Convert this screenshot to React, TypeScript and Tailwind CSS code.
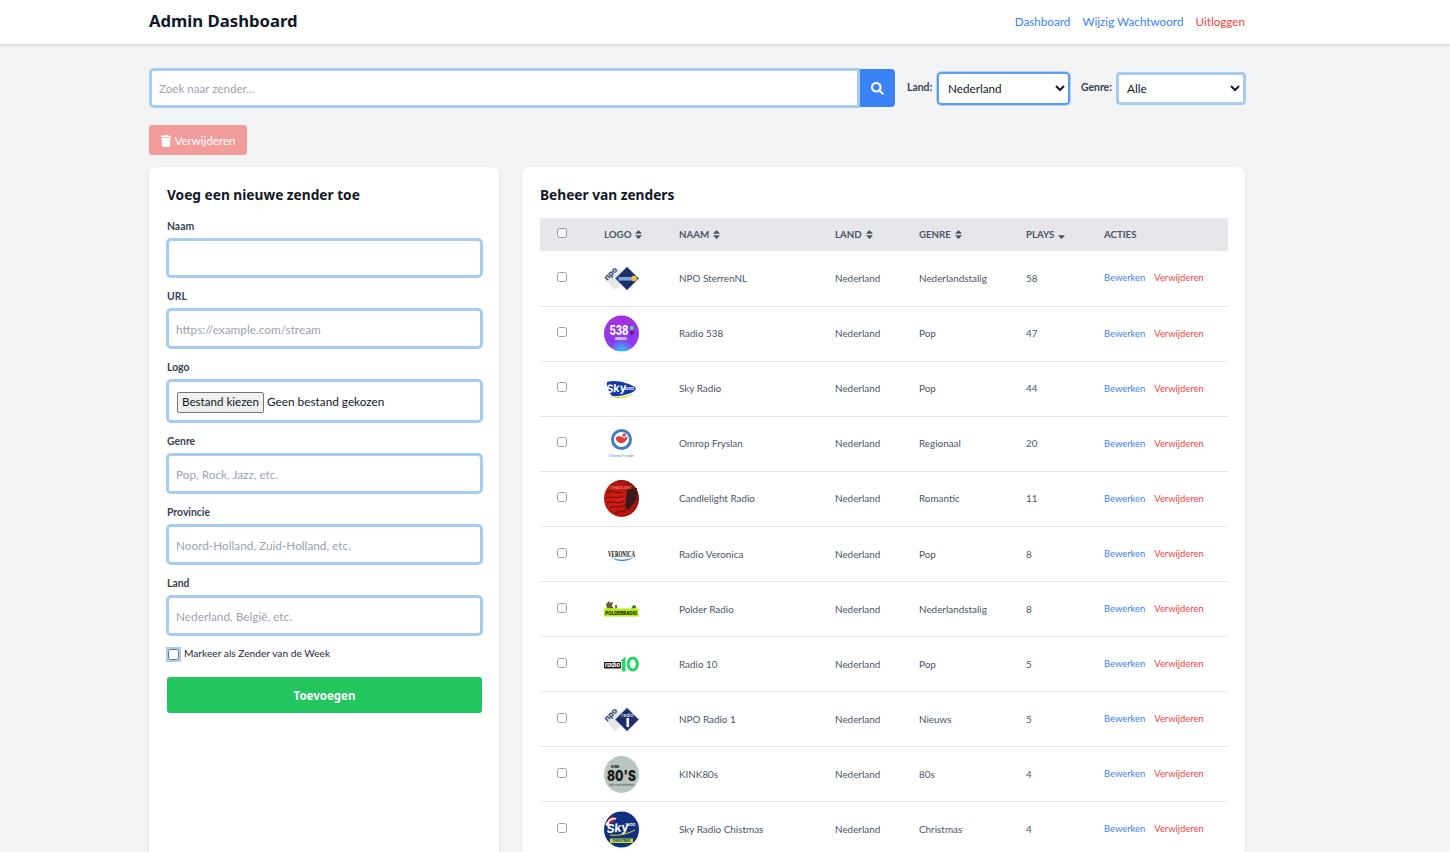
import React from "react";
import { FaSearch, FaTrash, FaSort, FaSortDown } from "react-icons/fa";

function Npo({ one }: { one?: boolean }) {
  return (
    <svg viewBox="0 0 35 37" width={35} height={37} className="overflow-visible">
      <rect x="3" y="9.5" width="17" height="17" rx="2" transform="rotate(45 11.5 18)" fill="#e4e6ea" />
      <text x="8.5" y="15.5" fontSize="8" fontWeight="700" fill="#1e3a6e" transform="rotate(-45 8.5 15.5)" textAnchor="middle" fontFamily="Inter, sans-serif">npo</text>
      <path d="M23 6.5 L35 18.5 L23 30.5 L11 18.5 Z" fill="#1b2f6b" stroke="#fff" strokeWidth="0.6" />
      {one ? (
        <>
          <text x="23.5" y="16" fontSize="5" fill="#fff" textAnchor="middle" fontFamily="Inter, sans-serif">radio</text>
          <rect x="22.5" y="17" width="2.6" height="9" fill="#fff" />
        </>
      ) : (
        <>
          <rect x="14.5" y="17" width="17" height="3.6" fill="#7ea3da" />
          <circle cx="30" cy="18.5" r="2.8" fill="#f3c33b" />
        </>
      )}
    </svg>
  );
}

function Logo538() {
  return (
    <svg viewBox="0 0 35 37" width={35} height={37} className="overflow-visible">
      <defs>
        <radialGradient id="g538" cx="50%" cy="100%" r="100%">
          <stop offset="0%" stopColor="#22d3ee" />
          <stop offset="35%" stopColor="#8b3cf0" />
          <stop offset="100%" stopColor="#a42ee0" />
        </radialGradient>
      </defs>
      <ellipse cx="17.5" cy="18.5" rx="17.5" ry="18" fill="url(#g538)" />
      <text x="15" y="20" fontSize="12.5" fontWeight="800" fill="#fff" textAnchor="middle" textLength="19" lengthAdjust="spacingAndGlyphs" fontFamily="Inter, sans-serif">538</text>
      <rect x="26" y="11" width="3.6" height="3.8" rx="1" fill="#4ade80" />
      <rect x="26" y="16" width="3.6" height="3.6" rx="1" fill="#4c1d95" />
      <text x="17" y="25" fontSize="3.6" fontWeight="800" fill="#fff" textAnchor="middle" fontFamily="Inter, sans-serif">RADIO</text>
    </svg>
  );
}

function Sky() {
  return (
    <svg viewBox="0 0 35 37" width={35} height={37} className="overflow-visible">
      <path d="M3 12 C12 9 24 13 31 17 C33 19 31 22 24 24 C15 26.5 9 27 7 25 C5 21 2 16 3 12 Z" fill="#1239a8" />
      <path d="M7 26 C14 28 24 26 30 23 C24 28.5 12 29.5 7 26 Z" fill="#d9e021" />
      <text x="12.5" y="22" fontSize="11" fontStyle="italic" fontWeight="700" fill="#fff" textAnchor="middle" transform="rotate(-6 12.5 22)" fontFamily="Inter, sans-serif">Sky</text>
      <text x="25" y="20" fontSize="3.2" fontWeight="700" fill="#fff" textAnchor="middle" fontFamily="Inter, sans-serif">RADIO</text>
    </svg>
  );
}

function Omrop() {
  return (
    <svg viewBox="0 0 35 37" width={35} height={37} className="overflow-visible">
      <circle cx="17.5" cy="14.5" r="10.5" fill="#3f7cc0" />
      <circle cx="17.5" cy="14.5" r="7.6" fill="#fff" />
      <path d="M11.5 12.5 C12.5 19 21.5 21 24 11.5 C22.5 11.5 21 12.5 20.5 13.5 C18 11 14.5 10.5 11.5 12.5 Z" fill="#e5383b" />
      <circle cx="20.2" cy="10" r="1.7" fill="#e5383b" />
      <text x="17.5" y="32" fontSize="3.6" fill="#4b7fb5" textAnchor="middle" fontFamily="Inter, sans-serif">Omrop Fryslân</text>
    </svg>
  );
}

function Candle() {
  return (
    <svg viewBox="0 0 35 37" width={35} height={37} className="overflow-visible">
      <defs>
        <radialGradient id="gcan" cx="40%" cy="55%" r="65%">
          <stop offset="0%" stopColor="#dc2018" />
          <stop offset="70%" stopColor="#b5140f" />
          <stop offset="100%" stopColor="#6e0f0c" />
        </radialGradient>
      </defs>
      <ellipse cx="17.5" cy="18.5" rx="17.5" ry="18.5" fill="url(#gcan)" />
      <path d="M3 13 C8 9 12 15 18 12 M2 18 C7 15 12 20 19 16 M3 23 C9 19 14 26 20 21 M6 28 C11 24 15 29 21 25 M11 33 C15 30 18 33 22 30" stroke="#7c0f0b" strokeWidth="1.3" fill="none" />
      <path d="M23 10 L33 8 L32 20 L25 30 L21 28 Z" fill="#3a1a18" />
      <text x="17" y="8.5" fontSize="3" fill="#e8b9b0" textAnchor="middle" fontFamily="Inter, sans-serif">CANDLELIGHT</text>
    </svg>
  );
}

function Veronica() {
  return (
    <svg viewBox="0 0 35 37" width={35} height={37} className="overflow-visible">
      <text x="17.5" y="20.5" fontSize="9" fontWeight="700" fill="#111" textAnchor="middle" textLength="27" lengthAdjust="spacingAndGlyphs" fontFamily="Liberation Serif, serif">VERONICA</text>
      <path d="M7 21 C13 24.5 22 24.5 30 21 C24 26.5 12 26.5 7 21 Z" fill="#2b8fd8" />
    </svg>
  );
}

function Polder() {
  return (
    <svg viewBox="0 0 35 37" width={35} height={37} className="overflow-visible">
      <path d="M2 13 L5 10 L6 12 L9 10.5 L8 15 L10 17.5 L3 17.5 Z" fill="#6b5a3a" />
      <path d="M11 14 h2 v3.5 h-2 Z" fill="#5b7a2e" />
      <path d="M27 17.5 L29.5 14 L32 15 L32 17.5 Z" fill="#3f7a1d" />
      <rect x="0" y="17.5" width="34.5" height="8" fill="#b6f000" />
      <text x="17.3" y="23.5" fontSize="5" fontWeight="800" fill="#111" textAnchor="middle" textLength="32" lengthAdjust="spacingAndGlyphs" fontFamily="Inter, sans-serif">POLDERRADIO</text>
    </svg>
  );
}

function Radio10() {
  return (
    <svg viewBox="0 0 35 37" width={35} height={37} className="overflow-visible">
      <rect x="0" y="16" width="17" height="6.5" rx="1" fill="#1a1a1a" />
      <text x="8.5" y="21.3" fontSize="6" fontWeight="700" fontStyle="italic" fill="#fff" textAnchor="middle" fontFamily="Inter, sans-serif">radio</text>
      <path d="M17 14.5 L21.5 10.5 L21.5 25.5 L18 25.5 L18 15.5 Z" fill="#22d866" />
      <ellipse cx="28.8" cy="18" rx="4.6" ry="6" fill="none" stroke="#22d866" strokeWidth="3" />
    </svg>
  );
}

function Kink() {
  return (
    <svg viewBox="0 0 35 37" width={35} height={37} className="overflow-visible">
      <ellipse cx="17.5" cy="18.5" rx="17.5" ry="18.5" fill="#b8c6bf" />
      <text x="7" y="12" fontSize="3.4" fontWeight="800" fill="#222" fontFamily="Inter, sans-serif">KINK</text>
      <text x="17.5" y="25" fontSize="14" fontWeight="900" fill="#1d1d1d" textAnchor="middle" textLength="29" lengthAdjust="spacingAndGlyphs" fontFamily="Inter, sans-serif">80'S</text>
      <text x="17.5" y="29.5" fontSize="2.8" fill="#333" textAnchor="middle" fontFamily="Inter, sans-serif">kijkt nooit achteruit</text>
    </svg>
  );
}

function SkyXmas() {
  return (
    <svg viewBox="0 0 35 37" width={35} height={37} className="overflow-visible">
      <ellipse cx="17.5" cy="18.5" rx="17.5" ry="18" fill="#12307f" />
      <path d="M2 13 C4 6 9 4 12 7 L9 11 Z" fill="#d92b2b" />
      <circle cx="3.5" cy="13" r="2" fill="#fff" />
      <path d="M4 11 C6 8 10 7 12 8" stroke="#fff" strokeWidth="1.5" fill="none" />
      <text x="14" y="21" fontSize="12" fontStyle="italic" fontWeight="700" fill="#fff" textAnchor="middle" transform="rotate(-6 14 21)" fontFamily="Inter, sans-serif">Sky</text>
      <text x="26.5" y="15" fontSize="3" fontWeight="700" fill="#fff" textAnchor="middle" fontFamily="Inter, sans-serif">RADIO</text>
      <path d="M6 24 C14 25 24 23 31 19" stroke="#d9e021" strokeWidth="1" fill="none" />
      <rect x="6" y="27.5" width="23" height="4.5" fill="#c9e02a" />
      <text x="17.5" y="31" fontSize="3" fontWeight="700" fill="#12307f" textAnchor="middle" fontFamily="Inter, sans-serif">CHRISTMAS</text>
    </svg>
  );
}

const rows = [
  { logo: <Npo />, naam: "NPO SterrenNL", genre: "Nederlandstalig", plays: 58 },
  { logo: <Logo538 />, naam: "Radio 538", genre: "Pop", plays: 47 },
  { logo: <Sky />, naam: "Sky Radio", genre: "Pop", plays: 44 },
  { logo: <Omrop />, naam: "Omrop Fryslan", genre: "Regionaal", plays: 20 },
  { logo: <Candle />, naam: "Candlelight Radio", genre: "Romantic", plays: 11 },
  { logo: <Veronica />, naam: "Radio Veronica", genre: "Pop", plays: 8 },
  { logo: <Polder />, naam: "Polder Radio", genre: "Nederlandstalig", plays: 8 },
  { logo: <Radio10 />, naam: "Radio 10", genre: "Pop", plays: 5 },
  { logo: <Npo one />, naam: "NPO Radio 1", genre: "Nieuws", plays: 5 },
  { logo: <Kink />, naam: "KINK80s", genre: "80s", plays: 4 },
  { logo: <SkyXmas />, naam: "Sky Radio Chistmas", genre: "Christmas", plays: 4 },
];

function Field({ label, placeholder, short }: { label: string; placeholder?: string; short?: boolean }) {
  return (
    <div className="flex flex-col">
      <label className="h-4 mb-1 text-[10.4px] leading-4 font-bold text-[#374151]">{label}</label>
      <input
        placeholder={placeholder}
        className={`-ml-px w-[317px] ${short ? "h-[40px]" : "h-[41px]"} rounded-[5px] border-[3px] border-[#a6ccf0] bg-white px-[7px] pt-[1px] text-[11.8px] outline-none placeholder:text-[#9ca3af]`}
      />
    </div>
  );
}

function Th({ children, icon }: { children: React.ReactNode; icon?: "sort" | "down" }) {
  return (
    <th className="px-[18px] text-left text-[9.7px] font-bold text-[#4b5563]">
      <span className="inline-flex items-center gap-[2px]">
        {children}
        {icon === "sort" && <FaSort className="text-[11px]" />}
        {icon === "down" && <FaSortDown className="text-[11px]" />}
      </span>
    </th>
  );
}

export default function App() {
  return (
    <div className="h-screen overflow-hidden bg-[#f3f4f6] font-['Lato','Noto_Sans',sans-serif] text-[#111827]">
      <header className="h-[44px] bg-white shadow-[0_1px_3px_rgba(0,0,0,0.18)]">
        <div className="ml-[149px] w-[1096px] h-full flex items-center justify-between">
          <h1 className="pb-[2px] font-['Noto_Sans',sans-serif] text-[16.7px] font-bold">Admin Dashboard</h1>
          <nav className="flex gap-3 text-[11.7px]">
            <a className="text-[#3b82f6]">Dashboard</a>
            <a className="text-[#3b82f6]">Wijzig Wachtwoord</a>
            <a className="text-[#ef4444]">Uitloggen</a>
          </nav>
        </div>
      </header>

      <main className="ml-[149px] w-[1096px] pt-[24px]">
        <div className="flex items-center h-[40px]">
          <input
            placeholder="Zoek naar zender..."
            className="w-[711px] shrink-0 h-[40px] rounded-l-[5px] border-[3px] border-[#a6ccf0] bg-white px-[7px] text-[11.6px] outline-none placeholder:text-[#9ca3af]"
          />
          <button className="w-[35px] shrink-0 h-[38px] flex items-center justify-center rounded-r-[4px] bg-[#3b82f6] text-white">
            <FaSearch className="text-[13px]" />
          </button>
          <span className="ml-[12px] w-[30px] shrink-0 text-[10.4px] font-bold text-[#374151]">Land:</span>
          <select className="w-[133px] shrink-0 h-[33px] rounded-[4px] border-[2px] border-[#5b9bf5] outline outline-1 outline-[#b6d3f3] bg-white pl-[5px] text-[11.7px] text-[#111827]">
            <option>Nederland</option>
          </select>
          <span className="ml-[11px] w-[35px] shrink-0 text-[10.4px] font-bold text-[#374151]">Genre:</span>
          <select className="w-[130px] shrink-0 h-[33px] rounded-[4px] border-[3px] border-[#a6ccf0] bg-white pl-[4px] text-[11.7px] text-[#111827]">
            <option>Alle</option>
          </select>
        </div>

        <button className="mt-[17px] flex items-center gap-[2px] w-[98px] h-[30px] pt-[1px] justify-center rounded-[3px] bg-[#f39c9c] text-[11.6px] text-white">
          <FaTrash className="text-[12px]" />
          Verwijderen
        </button>

        <div className="mt-[12px] flex gap-[23px] items-stretch">
          <section className="w-[350px] shrink-0 rounded-lg bg-white px-[18px] pt-[14px] pb-10 shadow-sm">
            <h2 className="h-[28px] mb-[9px] font-['Noto_Sans',sans-serif] text-[13.7px] leading-[28px] font-bold">Voeg een nieuwe zender toe</h2>
            <div className="flex flex-col gap-[10px]">
              <Field label="Naam" short />
              <Field label="URL" placeholder="https://example.com/stream" />
              <div className="flex flex-col">
                <label className="h-4 mb-1 text-[10.4px] leading-4 font-bold text-[#374151]">Logo</label>
                <div className="-ml-px w-[317px] h-[44px] rounded-[5px] border-[3px] border-[#a6ccf0] bg-white pl-[8px] pt-[2px] flex items-center text-[11.8px] text-[#111827]">
                  <span className="h-[21px] w-[87px] flex items-center justify-center rounded-[2px] border border-[#767676] bg-[#efefef] text-[11.6px] mr-[3px]">Bestand kiezen</span>
                  <span>Geen bestand gekozen</span>
                </div>
              </div>
              <Field label="Genre" placeholder="Pop, Rock, Jazz, etc." />
              <Field label="Provincie" placeholder="Noord-Holland, Zuid-Holland, etc." />
              <Field label="Land" placeholder="Nederland, België, etc." />
              <div className="flex items-center h-4">
                <span className="w-[15px] h-[15px] -ml-px mr-[3px] flex items-center justify-center bg-[#a6ccf0]">
                  <input type="checkbox" className="w-[11px] h-[11px] m-0" />
                </span>
                <span className="text-[10.2px] text-[#1f2937]">Markeer als Zender van de Week</span>
              </div>
            </div>
            <button className="mt-[15px] block w-[315px] h-[36px] pt-[1px] rounded-[3px] bg-[#22c55e] font-['Noto_Sans',sans-serif] text-[11.5px] font-bold text-white">Toevoegen</button>
          </section>

          <section className="w-[723px] rounded-lg bg-white pl-[18px] pr-[17px] pt-[14px] pb-[10px] shadow-sm">
            <h2 className="h-[28px] mb-[9px] font-['Noto_Sans',sans-serif] text-[13.7px] leading-[28px] font-bold">Beheer van zenders</h2>
            <table className="w-[688px] table-fixed border-collapse">
              <colgroup>
                <col className="w-[46px]" />
                <col className="w-[75px]" />
                <col className="w-[156px]" />
                <col className="w-[84px]" />
                <col className="w-[107px]" />
                <col className="w-[78px]" />
                <col className="w-[142px]" />
              </colgroup>
              <thead>
                <tr className="h-[33px] bg-[#e5e7eb]">
                  <th className="pl-[17px] text-left"><input type="checkbox" className="block w-[10px] h-[10px] m-0 -mt-[3px] opacity-70" /></th>
                  <Th icon="sort">LOGO</Th>
                  <Th icon="sort">NAAM</Th>
                  <Th icon="sort">LAND</Th>
                  <Th icon="sort">GENRE</Th>
                  <Th icon="down">PLAYS</Th>
                  <Th>ACTIES</Th>
                </tr>
              </thead>
              <tbody>
                {rows.map((r) => (
                  <tr key={r.naam} className="h-[55.1px] border-b border-[#e5e7eb] text-[9.9px] text-[#4b5563]">
                    <td className="pl-[17px]"><input type="checkbox" className="block w-[10px] h-[10px] m-0 -mt-[3px] opacity-70" /></td>
                    <td className="px-[18px] py-0"><div className="h-[37px] w-[35px]">{r.logo}</div></td>
                    <td className="px-[18px]">{r.naam}</td>
                    <td className="px-[18px]">Nederland</td>
                    <td className="px-[18px]">{r.genre}</td>
                    <td className="px-[18px]">{r.plays}</td>
                    <td className="px-[18px] whitespace-nowrap text-[9.4px]">
                      <a className="text-[#3b82f6]">Bewerken</a>
                      <a className="ml-[9px] text-[#ef4444]">Verwijderen</a>
                    </td>
                  </tr>
                ))}
              </tbody>
            </table>
          </section>
        </div>
      </main>
    </div>
  );
}
